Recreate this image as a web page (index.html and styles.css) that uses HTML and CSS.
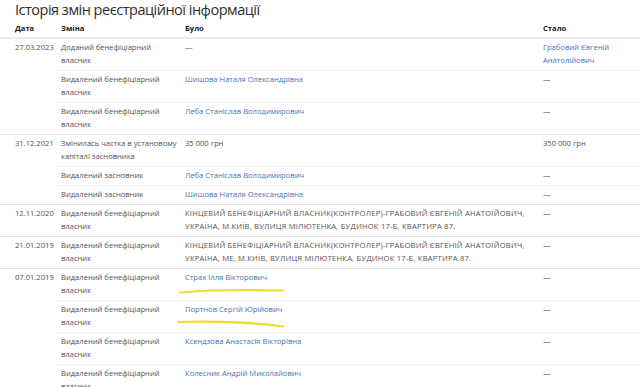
FILE: index.html
```html
<!DOCTYPE html>
<html lang="uk">
<head>
<meta charset="utf-8">
<link rel="stylesheet" href="styles.css">
</head>
<body>
<div class="page">
  <h1 class="title">Історія змін реєстраційної інформації</h1>
  <table class="hist">
    <colgroup>
      <col class="c-date"><col class="c-change"><col class="c-was"><col class="c-now">
    </colgroup>
    <thead>
      <tr><th class="date">Дата</th><th>Зміна</th><th>Було</th><th>Стало</th></tr>
    </thead>
    <tbody>
      <tr class="grp">
        <td class="date" rowspan="3">27.03.2023</td>
        <td>Доданий бенефіціарний<br>власник</td>
        <td>—</td>
        <td><a href="#">Грабовий Євгеній<br>Анатолійович</a></td>
      </tr>
      <tr>
        <td>Видалений бенефіціарний<br>власник</td>
        <td><a href="#">Шишова Наталя Олександрівна</a></td>
        <td>—</td>
      </tr>
      <tr>
        <td>Видалений бенефіціарний<br>власник</td>
        <td><a href="#">Леба Станіслав Володимирович</a></td>
        <td>—</td>
      </tr>
      <tr class="grp">
        <td class="date" rowspan="3">31.12.2021</td>
        <td>Змінилась частка в установому<br>капіталі засновника</td>
        <td>35 000 грн</td>
        <td>350 000 грн</td>
      </tr>
      <tr>
        <td>Видалений засновник</td>
        <td><a href="#">Леба Станіслав Володимирович</a></td>
        <td>—</td>
      </tr>
      <tr>
        <td>Видалений засновник</td>
        <td><a href="#">Шишова Наталя Олександрівна</a></td>
        <td>—</td>
      </tr>
      <tr class="grp">
        <td class="date">12.11.2020</td>
        <td>Видалений бенефіціарний<br>власник</td>
        <td class="caps">КІНЦЕВИЙ БЕНЕФІЦІАРНИЙ ВЛАСНИК(КОНТРОЛЕР)-ГРАБОВИЙ ЄВГЕНІЙ АНАТОІЙОВИЧ,<br>УКРАЇНА, М.КИЇВ, ВУЛИЦЯ МІЛЮТЕНКА, БУДИНОК 17-Б, КВАРТИРА 87.</td>
        <td>—</td>
      </tr>
      <tr class="grp">
        <td class="date">21.01.2019</td>
        <td>Видалений бенефіціарний<br>власник</td>
        <td class="caps">КІНЦЕВИЙ БЕНЕФІЦІАРНИЙ ВЛАСНИК(КОНТРОЛЕР)-ГРАБОВИЙ ЄВГЕНІЙ АНАТОІЙОВИЧ,<br>УКРАЇНА, МЕ, М.КИЇВ, ВУЛИЦЯ МІЛЮТЕНКА, БУДИНОК 17-Б, КВАРТИРА 87.</td>
        <td>—</td>
      </tr>
      <tr class="grp">
        <td class="date" rowspan="4">07.01.2019</td>
        <td>Видалений бенефіціарний<br>власник</td>
        <td><a href="#">Страх Ілля Вікторович</a></td>
        <td>—</td>
      </tr>
      <tr>
        <td>Видалений бенефіціарний<br>власник</td>
        <td><a href="#">Портнов Сергій Юрійович</a></td>
        <td>—</td>
      </tr>
      <tr>
        <td>Видалений бенефіціарний<br>власник</td>
        <td><a href="#">Ксендзова Анастасія Вікторівна</a></td>
        <td>—</td>
      </tr>
      <tr>
        <td>Видалений бенефіціарний<br>власник</td>
        <td><a href="#">Колесник Андрій Миколайович</a></td>
        <td>—</td>
      </tr>
    </tbody>
  </table>
  <svg class="marks" width="640" height="387" viewBox="0 0 640 387">
    <path d="M180 292.5 C 205 290, 240 289.5, 283 290.5" fill="none" stroke="#f1dc2e" stroke-width="2.2" stroke-linecap="round"/>
    <path d="M178 322 C 210 321, 250 322, 283 326.5" fill="none" stroke="#f1dc2e" stroke-width="2.2" stroke-linecap="round"/>
  </svg>
</div>
</body>
</html>
```

FILE: styles.css
```css
html, body {
  margin: 0;
  padding: 0;
  background: #ffffff;
}
body {
  font-family: "Open Sans", "Noto Sans", sans-serif;
  color: #525252;
  overflow: hidden;
}
.page {
  position: relative;
  width: 640px;
  height: 387px;
}
.title {
  margin: 0;
  padding: 0 0 0 15px;
  font-size: 14.5px;
  font-weight: 400;
  color: #2e2e2e;
  line-height: 20px;
  height: 20px;
  letter-spacing: -0.5px;
  white-space: nowrap;
}
.hist {
  width: 640px;
  border-collapse: collapse;
  table-layout: fixed;
  font-size: 7.6px;
  line-height: 13px;
}
.c-date { width: 56px; }
.c-change { width: 124px; }
.c-was { width: 358px; }
.c-now { width: 102px; }
.hist th {
  text-align: left;
  font-weight: 700;
  color: #1a1a1a;
  padding: 2px 5px 2px 5px;
  border-bottom: 2px solid #ececec;
}
.hist td {
  vertical-align: top;
  padding: 2px 5px 3px 5px;
  border-top: 1px solid #efefef;
  white-space: nowrap;
}
.hist th.date, .hist td.date {
  padding-left: 15px;
  padding-right: 0;
}
.hist tr.grp td {
  border-top: 1px solid #e2e2e2;
}
.hist td.caps {
  letter-spacing: 0.22px;
}
.hist a {
  color: #4673b4;
  text-decoration: none;
}
.marks {
  position: absolute;
  left: 0;
  top: 0;
  pointer-events: none;
}
```
